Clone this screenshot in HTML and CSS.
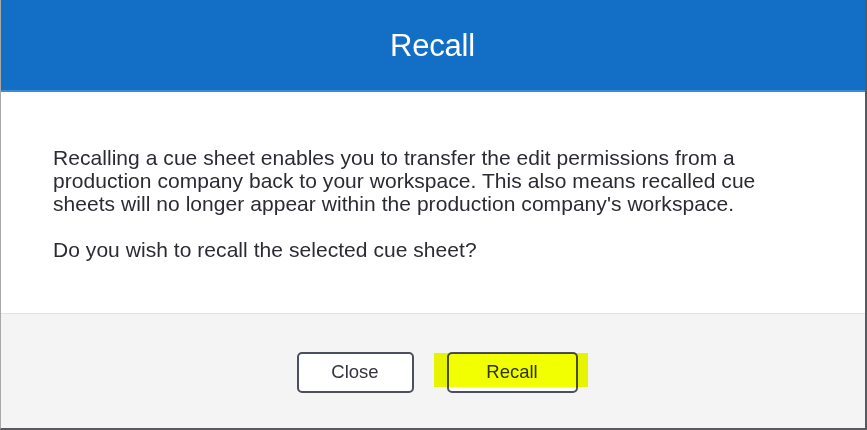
FILE: index.html
```html
<!DOCTYPE html>
<html>
<head>
<meta charset="utf-8">
<link rel="stylesheet" href="styles.css">
</head>
<body>
<div class="dialog">
  <div class="header"><h1 class="title">Recall</h1></div>
  <div class="content">
    <p class="para">Recalling a cue sheet enables you to transfer the edit permissions from a production company back to your workspace. This also means recalled cue sheets will no longer appear within the production company's workspace.</p>
    <p class="para">Do you wish to recall the selected cue sheet?</p>
  </div>
  <div class="footer">
    <button class="btn btn-close">Close</button>
    <div class="highlight-wrap">
      <button class="btn btn-recall">Recall</button>
      <span class="marker"></span>
    </div>
  </div>
</div>
</body>
</html>
```

FILE: styles.css
```css
html, body {
  margin: 0;
  padding: 0;
  background: #ffffff;
}
.dialog {
  width: 867px;
  height: 430px;
  box-sizing: border-box;
  border-left: 1px solid #a8a8a8;
  border-right: 2px solid #58595c;
  border-bottom: 2px solid #58595c;
  display: flex;
  flex-direction: column;
  font-family: "Liberation Sans", Arial, sans-serif;
  overflow: hidden;
}
.header {
  height: 90px;
  background: #136fc5;
  border-bottom: 2px solid #3f8ad3;
  display: flex;
  align-items: center;
  justify-content: center;
  margin-left: -1px;
}
.title {
  margin: 0;
  color: #ffffff;
  font-weight: normal;
  font-size: 31px;
  letter-spacing: -0.2px;
  padding-top: 2px;
}
.content {
  height: 222px;
  box-sizing: border-box;
  padding: 54px 40px 0 52px;
  background: #ffffff;
  border-bottom: 1px solid #e3e3e3;
}
.para {
  margin: 0 0 23px 0;
  color: #2b2b33;
  font-size: 21px;
  letter-spacing: 0.05px;
  line-height: 23px;
  max-width: 750px;
}
.footer {
  flex: 1;
  background: #f4f4f4;
  display: flex;
  align-items: center;
  justify-content: center;
  gap: 33px;
  padding-left: 8px;
  padding-top: 2px;
}
.btn {
  height: 41px;
  box-sizing: border-box;
  border: 2px solid #4b4f5e;
  border-radius: 5px;
  background: #ffffff;
  font-family: "Liberation Sans", Arial, sans-serif;
  font-size: 18.5px;
  color: #333340;
  padding: 0;
}
.btn-close {
  width: 117px;
}
.btn-recall {
  width: 131px;
  display: block;
}
.highlight-wrap {
  position: relative;
}
.marker {
  position: absolute;
  left: -13px;
  right: -10px;
  top: 1px;
  height: 34px;
  background: #f2ff00;
  mix-blend-mode: multiply;
  pointer-events: none;
}
```
